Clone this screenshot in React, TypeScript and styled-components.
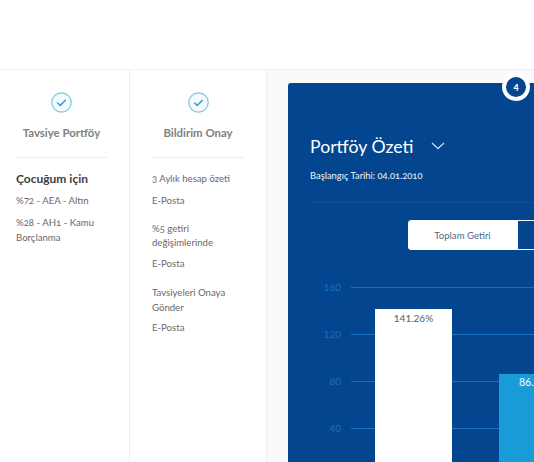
import React from 'react';
import styled, { createGlobalStyle } from 'styled-components';

const GlobalStyle = createGlobalStyle`
  html, body {
    margin: 0;
    padding: 0;
    width: 534px;
    height: 462px;
    overflow: hidden;
    background: #fff;
    font-family: "Lato", "Open Sans", sans-serif;
    font-feature-settings: "onum";
  }
  * { box-sizing: border-box; }
`;

const Page = styled.div`
  width: 534px;
  height: 462px;
  overflow: hidden;
  display: flex;
  flex-direction: column;
`;

const TopBar = styled.header`
  height: 70px;
  flex-shrink: 0;
  background: #fff;
  border-bottom: 1px solid #f0f0f0;
`;

const Body = styled.div`
  flex: 1;
  display: flex;
  min-height: 0;
`;

const Column = styled.section<{ $width: number }>`
  width: ${p => p.$width}px;
  flex-shrink: 0;
  padding: 22px 22px 0 ${p => (p.$width === 130 ? 16 : 22)}px;
  border-right: 1px solid #efefef;
  background: #fff;
`;

const ColumnHead = styled.div`
  height: 66px;
  display: flex;
  flex-direction: column;
  align-items: center;
  gap: 12px;
  border-bottom: 1px solid #eeeeee;
`;

const ColumnTitle = styled.h3`
  margin: 0;
  font-size: 11.4px;
  line-height: 16px;
  font-weight: 700;
  color: #808183;
  white-space: nowrap;
`;

const ColumnBody = styled.div`
  padding-top: 14px;
`;

const Strong = styled.div`
  font-size: 12px;
  line-height: 14px;
  font-weight: 700;
  color: #3d3e40;
  margin-bottom: 8px;
`;

const Line = styled.p<{ $gap?: number }>`
  margin: 0 0 ${p => p.$gap ?? 7.5}px;
  font-size: 9.6px;
  line-height: 14.5px;
  color: #68696b;
`;

const Main = styled.main`
  flex: 1;
  min-width: 0;
  background: #fafafa;
  padding: 13px 0 0 21px;
`;

const Panel = styled.div`
  position: relative;
  width: 400px;
  height: 420px;
  background: #03468f;
  border-radius: 3px 3px 0 0;
  padding: 50px 0 0 22px;
`;

const Badge = styled.div`
  position: absolute;
  left: 214px;
  top: -10px;
  width: 28px;
  height: 28px;
  border-radius: 50%;
  border: 4px solid #fff;
  background: #03468f;
  color: #fff;
  font-size: 9px;
  font-weight: 900;
  font-feature-settings: "lnum";
  display: flex;
  align-items: center;
  justify-content: center;
`;

const PanelTitle = styled.div`
  display: flex;
  align-items: center;
  gap: 18px;
  height: 26px;
  color: #fff;
  font-size: 17.7px;
`;

const StartDate = styled.div`
  margin-top: 10px;
  font-size: 9.4px;
  line-height: 14px;
  font-weight: 400;
  color: #f2f6fb;
`;

const Divider = styled.div`
  margin: 19px 0 17px;
  height: 1px;
  background: #0d5099;
`;

const Toggle = styled.div`
  margin-left: 98px;
  display: flex;
  width: 300px;
  height: 30px;
`;

const ToggleButton = styled.div<{ $active?: boolean }>`
  width: ${p => (p.$active ? 109 : 191)}px;
  border: 1px solid #fff;
  border-radius: ${p => (p.$active ? '3px 0 0 3px' : '0')};
  background: ${p => (p.$active ? '#fff' : 'transparent')};
  color: #4d6788;
  font-size: 9.6px;
  display: flex;
  align-items: center;
  justify-content: center;
`;

const Chart = styled.svg`
  display: block;
  margin: 20px 0 0 -22px;
  font-family: "Lato", sans-serif;
  font-feature-settings: "lnum";
`;

const Check = () => (
  <svg width="21" height="21" viewBox="0 0 21 21" fill="none">
    <circle cx="10.5" cy="10.5" r="9.7" fill="#f3fbfe" stroke="#7cc7dc" strokeWidth="1.2" />
    <path d="M6.6 11l2.7 2.4 5-5" stroke="#4b9cc4" strokeWidth="1.5" strokeLinecap="round" strokeLinejoin="round" />
  </svg>
);

const gridLines = [
  { label: '160', y: 17 },
  { label: '120', y: 64 },
  { label: '80', y: 111 },
  { label: '40', y: 158 },
];

const App: React.FC = () => (
  <Page>
    <GlobalStyle />
    <TopBar />
    <Body>
      <Column $width={130}>
        <ColumnHead>
          <Check />
          <ColumnTitle>Tavsiye Portföy</ColumnTitle>
        </ColumnHead>
        <ColumnBody>
          <Strong>Çocuğum için</Strong>
          <Line>%72 - AEA - Altın</Line>
          <Line>%28 - AH1 - Kamu Borçlanma</Line>
        </ColumnBody>
      </Column>
      <Column $width={137}>
        <ColumnHead>
          <Check />
          <ColumnTitle>Bildirim Onay</ColumnTitle>
        </ColumnHead>
        <ColumnBody>
          <Line>3 Aylık hesap özeti</Line>
          <Line $gap={13}>E-Posta</Line>
          <Line $gap={6.5}>%5 getiri değişimlerinde</Line>
          <Line $gap={14.5}>E-Posta</Line>
          <Line $gap={6}>Tavsiyeleri Onaya Gönder</Line>
          <Line>E-Posta</Line>
        </ColumnBody>
      </Column>
      <Main>
        <Panel>
          <Badge>4</Badge>
          <PanelTitle>
            Portföy Özeti
            <svg width="14" height="8" viewBox="0 0 14 8" fill="none">
              <path d="M1 1l6 5.5L13 1" stroke="#c9d8ea" strokeWidth="1.3" />
            </svg>
          </PanelTitle>
          <StartDate>Başlangıç Tarihi: 04.01.2010</StartDate>
          <Divider />
          <Toggle>
            <ToggleButton $active>Toplam Getiri</ToggleButton>
            <ToggleButton />
          </Toggle>
          <Chart width="246" height="192" viewBox="0 0 246 192">
            {gridLines.map(g => (
              <g key={g.label}>
                <line x1="63" x2="246" y1={g.y + 0.5} y2={g.y + 0.5} stroke="#1a6fc0" strokeWidth="1" />
                <text x="53" y={g.y + 4} textAnchor="end" fontSize="10" fill="#1670bd">
                  {g.label}
                </text>
              </g>
            ))}
            <rect x="87" y="39" width="77" height="153" fill="#fff" />
            <text x="125.5" y="51.5" textAnchor="middle" fontSize="10" fill="#5d5e60">
              141.26%
            </text>
            <rect x="211" y="104" width="35" height="88" fill="#189bd6" />
            <text x="231" y="115.5" fontSize="10.5" fill="#fff">86.</text>
          </Chart>
        </Panel>
      </Main>
    </Body>
  </Page>
);

export default App;
